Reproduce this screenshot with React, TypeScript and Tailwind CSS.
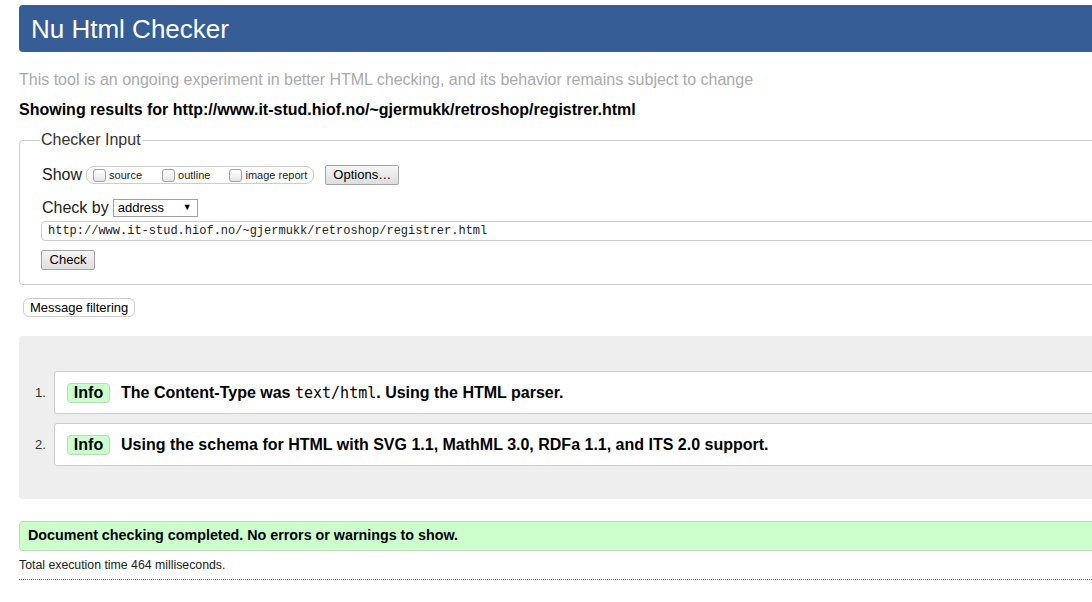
import React from 'react';

const sans = { fontFamily: '"Liberation Sans", Arial, sans-serif' };

const Box: React.FC = () => (
  <span className="inline-block w-[13px] h-[13px] rounded-[3px] border border-[#a0a0a0] bg-gradient-to-b from-white to-[#e6e6e6] mr-[3px] align-[-1px]" />
);

const Btn: React.FC<{ label: string; className?: string }> = ({ label, className = '' }) => (
  <span
    className={`flex items-center justify-center h-[20px] border border-[#a3a3a3] rounded-[2px] bg-gradient-to-b from-[#f6f6f6] to-[#dedede] text-[13px] text-black ${className}`}
  >
    {label}
  </span>
);

const Message: React.FC<{ n: number; children: React.ReactNode }> = ({ n, children }) => (
  <div className="flex items-center">
    <span className="w-[35px] shrink-0 pl-[16px] text-[13px] text-[#333]">{n}.</span>
    <div className="flex-1 h-[43px] flex items-center bg-white border border-[#ccc] rounded-[3px] pl-[12px]">
      <span className="inline-flex items-center justify-center w-[43px] h-[20px] bg-[#ccffcc] border border-[#b5dcb5] rounded-[4px] text-[16px] font-bold text-black">
        Info
      </span>
      <span className="ml-[11px] text-[16px] font-bold text-black">{children}</span>
    </div>
  </div>
);

export default function App() {
  return (
    <div className="w-full h-[602px] bg-white overflow-hidden" style={sans}>
      <div className="w-[1160px] pl-[19px] pt-[5px]">
        <div className="h-[47px] bg-[#365d96] rounded-[4px] flex items-center pl-[12px]">
          <h1 className="text-[26px] text-white leading-none">Nu Html Checker</h1>
        </div>

        <p className="mt-[19px] text-[16px] leading-[18px] text-[#aaa]">
          This tool is an ongoing experiment in better HTML checking, and its behavior remains subject to change
        </p>
        <p className="mt-[12px] text-[16px] leading-[18px] font-bold text-black">
          Showing results for http://www.it-stud.hiof.no/~gjermukk/retroshop/registrer.html
        </p>

        <fieldset className="mt-[12px] border border-[#ccc] rounded-[4px]">
          <legend className="ml-[20px] px-[1px] text-[16px] leading-[18px] text-[#333]">Checker Input</legend>

          <div className="pl-[22px] pb-[14px]">
            <div className="mt-[16px] flex items-center h-[20px]">
              <span className="text-[16px] text-[#222]">Show</span>
              <span className="ml-[4px] h-[18px] flex items-center border border-[#ccc] rounded-[8px] pl-[6px] pr-[6px] text-[11px] text-[#222]">
                <Box />
                <span className="mr-[20px]">source</span>
                <Box />
                <span className="mr-[19px]">outline</span>
                <Box />
                <span>image report</span>
              </span>
              <Btn label="Options…" className="ml-[11px] w-[74px]" />
            </div>

            <div className="mt-[14px] flex items-center h-[18px]">
              <span className="text-[16px] text-[#222]">Check by</span>
              <span className="ml-[4px] w-[85px] h-[18px] flex items-center justify-between border border-[#a0a0a0] bg-white pl-[4px] pr-[5px] text-[13px] text-black">
                <span>address</span>
                <span className="text-[9px]">▼</span>
              </span>
            </div>

            <div
              className="mt-[4px] -ml-[1px] h-[20px] flex items-center border border-[#ccc] rounded-[4px] pl-[6px] text-[12px] text-[#222]"
              style={{ fontFamily: '"Liberation Mono", "DejaVu Sans Mono", monospace' }}
            >
              http://www.it-stud.hiof.no/~gjermukk/retroshop/registrer.html
            </div>

            <div className="mt-[9px] -ml-[1px] flex">
              <Btn label="Check" className="w-[54px]" />
            </div>
          </div>
        </fieldset>

        <div className="mt-[13px] ml-[4px] flex">
          <span className="flex items-center h-[19px] px-[6px] border border-[#ccc] rounded-[6px] bg-white text-[13px] text-black">
            Message filtering
          </span>
        </div>

        <div className="mt-[19px] h-[163px] bg-[#eeeeee] rounded-[4px] pt-[35px] flex flex-col gap-[9px]">
          <Message n={1}>
            The Content-Type was{' '}
            <code className="font-normal text-[15px]" style={{ fontFamily: '"DejaVu Sans Mono", "Liberation Mono", monospace' }}>
              text/html
            </code>
            . Using the HTML parser.
          </Message>
          <Message n={2}>Using the schema for HTML with SVG 1.1, MathML 3.0, RDFa 1.1, and ITS 2.0 support.</Message>
        </div>

        <div className="mt-[22px] h-[30px] flex items-center bg-[#ccffcc] border border-[#bcd9bc] rounded-[4px] pl-[8px] text-[14.3px] font-bold text-black">
          Document checking completed. No errors or warnings to show.
        </div>

        <p className="mt-[7px] text-[12.3px] leading-[14px] text-[#222]">Total execution time 464 milliseconds.</p>
        <div className="mt-[7px] border-t border-dotted border-[#666]" />
      </div>
    </div>
  );
}
